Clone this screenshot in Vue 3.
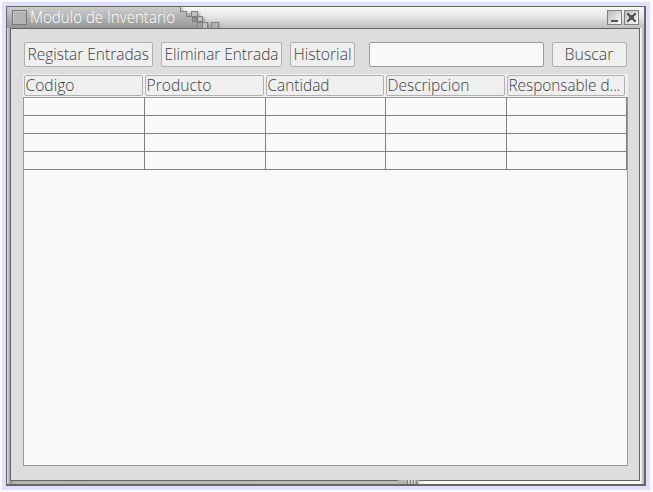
<script setup>
const columns = [
  { label: 'Codigo', w: 49 },
  { label: 'Producto', w: 65 },
  { label: 'Cantidad', w: 62 },
  { label: 'Descripcion', w: 82 },
  { label: 'Responsable d...', w: 112 },
]
const rows = 4
</script>

<template>
  <div class="desktop">
    <div class="window">
      <header class="titlebar">
        <div class="title-left">
          <span class="menu-box"></span>
          <svg class="title" width="149" height="21"><text x="0" y="16" textLength="145" lengthAdjust="spacingAndGlyphs">Modulo de Inventario</text></svg>
        </div>
        <svg class="steps" width="44" height="21" viewBox="180 7 44 21" shape-rendering="crispEdges">
          <defs>
            <linearGradient id="g" x1="0" y1="0" x2="0" y2="1">
              <stop offset="0" stop-color="#cacaca" /><stop offset="1" stop-color="#979797" />
            </linearGradient>
            <filter id="blur" x="-30%" y="-30%" width="160%" height="160%"><feGaussianBlur stdDeviation="1.300" /></filter>
          </defs>
          <path d="M180 8h3v4h5v1h12v5h5v5h5v5h2v-5h8v6h-40z" fill="#777" fill-opacity=".55" filter="url(#blur)" />
          <path d="M180 7h1v4h5v5h6v6h5v6h-17z" fill="url(#g)" />
          <path d="M180.500 7v4.500h6v5h5.500" fill="none" stroke="#808080" />
          <g fill="#c0c0c0" stroke="#808080">
            <rect x="191.500" y="11.500" width="6" height="5" />
            <rect x="192.500" y="17.500" width="4" height="4" fill="#909090" />
            <rect x="197.500" y="16.500" width="5" height="5" />
            <rect x="197.500" y="22.500" width="5" height="6" fill="#a0a0a0" />
            <rect x="202.500" y="22.500" width="5" height="6" />
            <rect x="211.500" y="22.500" width="7" height="6" fill="#b0b0b0" />
          </g>
        </svg>
        <div class="controls">
          <span class="control"><svg width="13" height="13"><path d="M3 9h7v2H3z" fill="#555" /></svg></span>
          <span class="control"><svg width="13" height="13" shape-rendering="crispEdges"><path d="M2 2h2v1h1v1h3V3h1V2h2v2h-1v1H9v3h1v1h1v2H9v-1H8V9H5v1H4v1H2V9h1V8h1V5H3V4H2z" fill="#555" /></svg></span>
        </div>
      </header>

      <main class="content">
        <div class="toolbar">
          <button class="b1"><svg width="125" height="23"><text x="2.500" y="17" textLength="121.500" lengthAdjust="spacingAndGlyphs">Registar Entradas</text></svg></button>
          <button class="b2"><svg width="118" height="23"><text x="2.500" y="17" textLength="114" lengthAdjust="spacingAndGlyphs">Eliminar Entrada</text></svg></button>
          <button class="b3"><svg width="62" height="23"><text x="2.500" y="17" textLength="58" lengthAdjust="spacingAndGlyphs">Historial</text></svg></button>
          <input class="search" type="text" />
          <button class="b4"><svg width="72" height="23"><text x="11.500" y="17" textLength="49" lengthAdjust="spacingAndGlyphs">Buscar</text></svg></button>
        </div>
        <div class="heads">
          <div v-for="c in columns" :key="c.label" class="head">
            <svg width="116" height="19"><text x="0.500" y="15" :textLength="c.w" lengthAdjust="spacingAndGlyphs">{{ c.label }}</text></svg>
          </div>
        </div>
        <div class="table">
          <div v-for="r in rows" :key="r" class="row">
            <div v-for="c in columns" :key="c.label" class="cell"></div>
          </div>
        </div>
      </main>
      <svg class="grip" width="21" height="4" shape-rendering="crispEdges">
        <path d="M0 0h21v4H0z" fill="#b4b4b4" /><path d="M9 0h1v4H9zM12 0h1v4h-1zM15 0h1v4h-1zM18 0h1v4h-1z" fill="#808080" />
        <path d="M10 0h1v4h-1zM13 0h1v4h-1zM16 0h1v4h-1z" fill="#ddd" />
      </svg>
    </div>
  </div>
</template>

<style>
body { background: #fafafa; }
</style>

<style scoped>
* { box-sizing: border-box; }
svg { display: block; flex: none; }
.head svg, button svg { overflow: visible; }
text { font-family: "Open Sans", "Noto Sans", sans-serif; font-weight: 300; font-size: 15.5px; fill: #404040; }
.desktop { width: 648px; height: 488px; margin: 2px; padding: 4px; background: #dfdfff; display: flow-root; }
.window {
  position: relative; width: 640px; height: 480px; padding: 0 4px 4px 3px;
  border: 1px solid #666; border-width: 1px 2px 2px 1px;
  background: linear-gradient(90deg, #d8d8d8 0, #d0d0d0 1px, #999 3px, #b4b4b4 8px, #bcbcbc 390px, #f8f8f8 418px, #f8f8f8 634px, #ccc 635px, #bbb 637px);
}
.titlebar {
  display: flex; align-items: stretch; height: 21px; margin: 0 -4px 0 -3px; padding-right: 5px;
  background: linear-gradient(#f8f8f8, #e7e7e7 45%, #bdbdbd);
}
.title-left { display: flex; width: 173px; background: linear-gradient(#cdcdcd, #979797); }
.menu-box { flex: none; width: 15px; height: 15px; margin: 3px 3px 0 5px; background: #b3b3b3; border: 1px solid #777; box-shadow: inset 1px 1px #c5c5c5; }
.title text { fill: #fff; }
.controls { display: flex; gap: 2px; margin: 3px 0 0 auto; }
.control { width: 15px; height: 15px; border: 1px solid #808080; background: linear-gradient(135deg, #bbb, #fafafa); }
.content { height: 453px; padding: 13px 12px 14px; border: 1px solid #666; background: #ddd; }
.toolbar { display: flex; height: 25px; padding-left: 1px; }
button, .search { margin: 0; padding: 0; height: 25px; border: 1px solid #b0b0b0; border-radius: 2px; background: #efefef; flex: none; }
button { display: flex; align-items: flex-start; }
.b1 { width: 129px; margin-right: 8px; }
.b2 { width: 121px; margin-right: 8px; }
.b3 { width: 65px; margin-right: 14px; }
.search { width: 175px; margin-right: 8px; background: #f9f9f9; border-color: #999; }
.b4 { width: 75px; }
.heads { display: grid; grid-template-columns: 119px 119px 118px 119px 118px; column-gap: 2px; width: 605px; height: 23px; margin-top: 7px; padding: 1px 0 0 1px; background: #f0f0f0; }
.head { height: 21px; border: 1px solid #b0b0b0; border-radius: 2px; background: #efefef; }
.table { width: 605px; height: 369px; border: 1px solid #999; background: #f9f9f9; }
.row { display: grid; grid-template-columns: 121px 121px 120px 121px 120px; height: 18px; }
.cell { border-right: 1px solid #808080; border-bottom: 1px solid #808080; }
.grip { position: absolute; left: 391px; bottom: 0; }
</style>
